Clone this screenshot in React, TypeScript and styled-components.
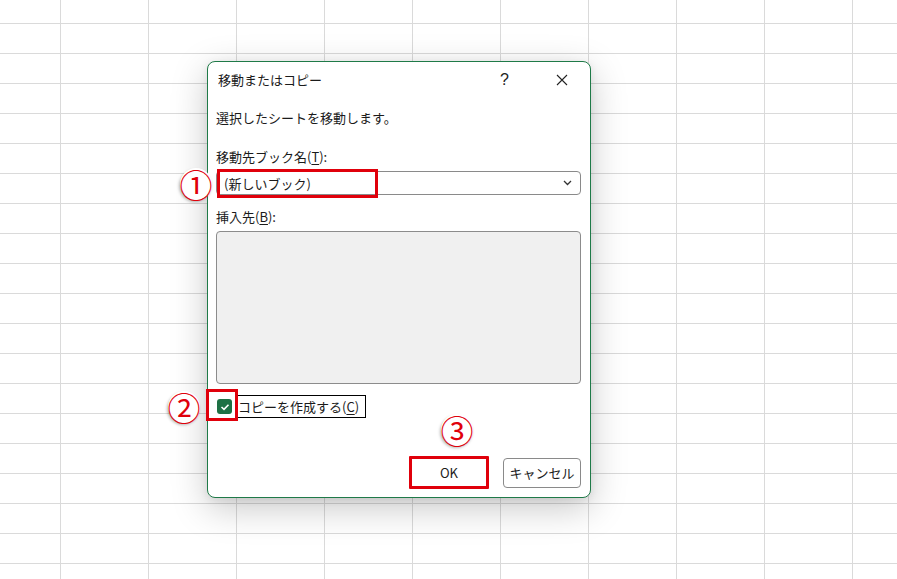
import React from "react";
import styled, { createGlobalStyle } from "styled-components";

const Global = createGlobalStyle`
  html, body { margin: 0; padding: 0; }
  body {
    width: 897px;
    height: 579px;
    overflow: hidden;
    font-family: "Noto Sans CJK JP", "Noto Sans", sans-serif;
    color: #1b1b1b;
  }
`;

const Sheet = styled.div`
  width: 897px;
  height: 579px;
  box-sizing: border-box;
  padding: 61px 0 0 207px;
  background-color: #ffffff;
  background-image:
    linear-gradient(to right, #dadada 1px, transparent 1px),
    linear-gradient(to bottom, #dadada 1px, transparent 1px);
  background-size: 88px 30px;
  background-position: 60px 23px;
`;

const Dialog = styled.div`
  position: relative;
  width: 384px;
  height: 437px;
  box-sizing: border-box;
  background: #ffffff;
  border: 1px solid #1f7a48;
  border-radius: 8px;
  box-shadow: 0 10px 36px rgba(0, 0, 0, 0.22), 0 2px 8px rgba(0, 0, 0, 0.08);
  display: flex;
  flex-direction: column;
`;

const TitleBar = styled.div`
  height: 35px;
  display: flex;
  align-items: center;
  padding-left: 10px;
`;

const Title = styled.div`
  flex: 1;
  font-size: 13px;
  color: #1b1b1b;
`;

const TitleButton = styled.div`
  width: 57px;
  height: 35px;
  display: flex;
  align-items: center;
  justify-content: center;
  font-size: 16px;
  font-family: "Liberation Sans", sans-serif;
  color: #222;
`;

const Body = styled.div`
  flex: 1;
  display: flex;
  flex-direction: column;
  padding: 0 9px 8px 8px;
`;

const Text = styled.div<{ $mt: number }>`
  margin-top: ${(p) => p.$mt}px;
  height: 20px;
  line-height: 20px;
  font-size: 13px;
  white-space: nowrap;
`;

const U = styled.span`
  text-decoration: underline;
  text-underline-offset: 2px;
`;

const Select = styled.div`
  position: relative;
  margin-top: 4px;
  height: 24px;
  box-sizing: border-box;
  border: 1px solid #8a8a8a;
  border-radius: 4px;
  background: #fff;
  display: flex;
  align-items: center;
  padding: 0 8px 0 7px;
  font-size: 13px;
`;

const SelectValue = styled.div`
  flex: 1;
`;

const ListBox = styled.div`
  margin-top: 4px;
  height: 153px;
  box-sizing: border-box;
  background: #f0f0f0;
  border: 1px solid #8c8c8c;
  border-radius: 4px;
`;

const CheckRow = styled.div`
  position: relative;
  margin-top: 11px;
  height: 23px;
  display: flex;
  align-items: center;
  gap: 5px;
`;

const CheckBox = styled.div`
  width: 15px;
  height: 15px;
  margin-left: 1px;
  border-radius: 3px;
  background: #1e7145;
  display: flex;
  align-items: center;
  justify-content: center;
`;

const CheckLabel = styled.div`
  height: 23px;
  box-sizing: border-box;
  border: 1.5px solid #000;
  padding: 0 6px 0 1px;
  display: flex;
  align-items: center;
  font-size: 13px;
  margin-left: -1px;
`;

const ButtonRow = styled.div`
  position: relative;
  margin-top: auto;
  display: flex;
  justify-content: flex-end;
  align-items: center;
  gap: 14px;
`;

const Button = styled.div<{ $hl?: boolean }>`
  width: ${(p) => (p.$hl ? 80 : 78)}px;
  height: ${(p) => (p.$hl ? 33 : 30)}px;
  box-sizing: border-box;
  border: ${(p) => (p.$hl ? "3px solid #e0000b" : "1px solid #8a8a8a")};
  border-radius: ${(p) => (p.$hl ? 1 : 4)}px;
  background: #fff;
  display: flex;
  align-items: center;
  justify-content: center;
  font-size: 13px;
  color: #1b1b1b;
`;

const RedBox = styled.div<{ $l: number; $t: number; $w: number; $h: number }>`
  position: absolute;
  left: ${(p) => p.$l}px;
  top: ${(p) => p.$t}px;
  width: ${(p) => p.$w}px;
  height: ${(p) => p.$h}px;
  box-sizing: border-box;
  border: 3px solid #e0000b;
  pointer-events: none;
`;

const Badge = styled.div<{ $l: number; $t: number }>`
  position: absolute;
  left: ${(p) => p.$l}px;
  top: ${(p) => p.$t}px;
  width: 32px;
  height: 32px;
  border-radius: 50%;
  background: #fff;
  box-shadow: -1px 2px 3px rgba(0, 0, 0, 0.28);
  display: flex;
  align-items: center;
  justify-content: center;
  color: #e0000b;
  font-size: 33px;
  line-height: 1;
  font-family: "Noto Sans CJK JP", sans-serif;
`;

const Chevron = () => (
  <svg width="9" height="6" viewBox="0 0 9 6">
    <path d="M1 1 L4.5 4.5 L8 1" fill="none" stroke="#333" strokeWidth="1.3" />
  </svg>
);

const CloseIcon = () => (
  <svg width="12" height="12" viewBox="0 0 12 12">
    <path d="M1 1 L11 11 M11 1 L1 11" stroke="#222" strokeWidth="1.1" fill="none" />
  </svg>
);

const Check = () => (
  <svg width="10" height="8" viewBox="0 0 10 8">
    <path d="M1.5 4 L4 6.3 L8.5 1.7" fill="none" stroke="#fff" strokeWidth="1.6" />
  </svg>
);

export default function App() {
  return (
    <>
      <Global />
      <Sheet>
        <Dialog>
          <TitleBar>
            <Title>移動またはコピー</Title>
            <TitleButton>?</TitleButton>
            <TitleButton>
              <CloseIcon />
            </TitleButton>
          </TitleBar>
          <Body>
            <Text $mt={11}>選択したシートを移動します。</Text>
            <Text $mt={19}>
              移動先ブック名(<U>T</U>):
            </Text>
            <Select>
              <SelectValue>(新しいブック)</SelectValue>
              <Chevron />
              <RedBox $l={0} $t={-3} $w={161} $h={29} />
              <Badge $l={-37} $t={-4}>①</Badge>
            </Select>
            <Text $mt={12}>
              挿入先(<U>B</U>):
            </Text>
            <ListBox />
            <CheckRow>
              <CheckBox>
                <Check />
              </CheckBox>
              <CheckLabel>
                コピーを作成する(<U>C</U>)
              </CheckLabel>
              <RedBox $l={-10} $t={-6} $w={32} $h={32} />
              <Badge $l={-48} $t={-4}>②</Badge>
            </CheckRow>
            <ButtonRow>
              <Button $hl>OK</Button>
              <Button>キャンセル</Button>
              <Badge $l={225} $t={-42}>③</Badge>
            </ButtonRow>
          </Body>
        </Dialog>
      </Sheet>
    </>
  );
}
